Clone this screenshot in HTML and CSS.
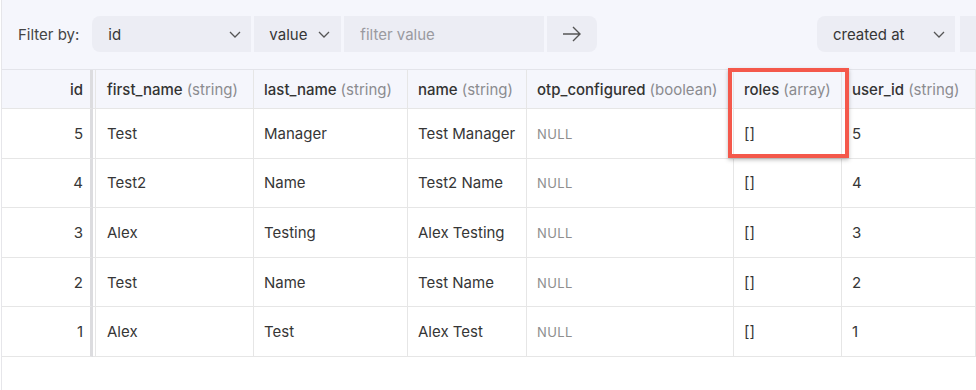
FILE: index.html
```html
<!DOCTYPE html>
<html lang="en">
<head>
    <meta charset="UTF-8">
    <meta name="viewport" content="width=device-width, initial-scale=1.0">
    <title>users</title>
    <link rel="stylesheet" href="styles.css">
</head>
<body>

    <div class="page">
        <div class="filter-bar">
            <span class="filter-label">Filter by:</span>
            <div class="select select-field">
                <span>id</span>
                <svg class="chevron" width="12" height="7" viewBox="0 0 12 7"><path d="M1 1l5 5 5-5" fill="none" stroke="#555" stroke-width="1.3"/></svg>
            </div>
            <div class="select select-op">
                <span>value</span>
                <svg class="chevron" width="12" height="7" viewBox="0 0 12 7"><path d="M1 1l5 5 5-5" fill="none" stroke="#555" stroke-width="1.3"/></svg>
            </div>
            <input class="filter-input" type="text" placeholder="filter value">
            <button class="go">
                <svg width="20" height="16" viewBox="0 0 20 16"><path d="M1 8h17M11 1l7 7-7 7" fill="none" stroke="#555" stroke-width="1.4"/></svg>
            </button>
            <div class="spacer"></div>
            <div class="select select-sort">
                <span>created at</span>
                <svg class="chevron" width="12" height="7" viewBox="0 0 12 7"><path d="M1 1l5 5 5-5" fill="none" stroke="#555" stroke-width="1.3"/></svg>
            </div>
            <div class="select select-dir"></div>
        </div>

        <table class="grid">
            <thead>
                <tr>
                    <th class="c-id num">id</th>
                    <th class="c-first first">first_name <span class="type">(string)</span></th>
                    <th class="c-last">last_name <span class="type">(string)</span></th>
                    <th class="c-name">name <span class="type">(string)</span></th>
                    <th class="c-otp">otp_configured <span class="type">(boolean)</span></th>
                    <th class="c-roles">roles <span class="type">(array)</span></th>
                    <th class="c-user">user_id <span class="type">(string)</span></th>
                    <th class="c-more"></th>
                </tr>
            </thead>
            <tbody>
                <tr>
                    <td class="num">5</td><td class="first">Test</td><td>Manager</td><td>Test Manager</td>
                    <td><span class="null">NULL</span></td><td>[]</td><td>5</td><td></td>
                </tr>
                <tr>
                    <td class="num">4</td><td class="first">Test2</td><td>Name</td><td>Test2 Name</td>
                    <td><span class="null">NULL</span></td><td>[]</td><td>4</td><td></td>
                </tr>
                <tr>
                    <td class="num">3</td><td class="first">Alex</td><td>Testing</td><td>Alex Testing</td>
                    <td><span class="null">NULL</span></td><td>[]</td><td>3</td><td></td>
                </tr>
                <tr>
                    <td class="num">2</td><td class="first">Test</td><td>Name</td><td>Test Name</td>
                    <td><span class="null">NULL</span></td><td>[]</td><td>2</td><td></td>
                </tr>
                <tr>
                    <td class="num">1</td><td class="first">Alex</td><td>Test</td><td>Alex Test</td>
                    <td><span class="null">NULL</span></td><td>[]</td><td>1</td><td></td>
                </tr>
            </tbody>
        </table>

        <!-- annotation around the roles column -->
        <div class="highlight"></div>
    </div>

</body>
</html>
```

FILE: styles.css
```css
* {
    margin: 0;
    padding: 0;
    box-sizing: border-box;
}

body {
    font-family: 'Inter', 'Noto Sans', sans-serif;
    font-size: 15px;
    color: #363636;
    background-color: #fff;
    overflow: hidden;
}

.page {
    position: relative;
    margin-left: 1px;
    height: 390px;
    border-left: 1px solid #e6e6ea;
    overflow: hidden;
}

/* filter bar */
.filter-bar {
    display: flex;
    align-items: center;
    gap: 3px;
    height: 70px;
    padding: 16px 0 17px 16px;
    background-color: #f5f6fc;
    border-bottom: 1px solid #e3e4ea;
}

.filter-label {
    color: #444;
    margin-right: 10px;
}

.select,
.filter-input,
.go {
    height: 36px;
    background-color: #ecedf4;
    border: none;
    font-family: inherit;
    font-size: 15px;
    color: #363636;
}

.select {
    display: flex;
    align-items: center;
    justify-content: space-between;
}

.select-field {
    width: 159px;
    padding: 0 10px 0 16px;
    border-radius: 8px 0 0 8px;
}

.select-op {
    width: 87px;
    padding: 0 11px 0 15px;
}

.filter-input {
    width: 200px;
    padding: 0 16px;
    outline: none;
}

.filter-input::placeholder {
    color: #9a9aa0;
}

.go {
    width: 50px;
    border-radius: 0 8px 8px 0;
    display: flex;
    align-items: center;
    justify-content: center;
}

.spacer {
    flex: 1;
}

.select-sort {
    width: 138px;
    padding: 0 10px 0 16px;
    border-radius: 8px 0 0 8px;
}

.select-dir {
    width: 40px;
    margin-left: 2px;
    margin-right: -24px;
}

/* table */
.grid {
    table-layout: fixed;
    width: 1122px;
    border-collapse: separate;
    border-spacing: 0;
}

.grid th,
.grid td {
    text-align: left;
    padding: 0 10px;
    border-right: 1px solid #e6e6e6;
    border-bottom: 1px solid #e6e6e6;
    white-space: nowrap;
    overflow: hidden;
}

.grid th {
    height: 39px;
    font-weight: 500;
    color: #333;
    background-color: #f5f6fc;
}

.grid td {
    height: 49.6px;
}

.type {
    font-weight: 400;
    color: #8b8b8f;
}

.grid .num {
    text-align: right;
    padding-right: 7px;
    border-right: 3px solid #dcdcdf;
}

.grid .first {
    padding-left: 14px;
    box-shadow: inset 2px 0 0 #fff, inset 3px 0 0 #e6e6e6;
}

.grid th.first {
    box-shadow: inset 2px 0 0 #f5f6fc, inset 3px 0 0 #e6e6e6;
}

.c-id { width: 91px; }
.c-first { width: 161px; }
.c-last { width: 154px; }
.c-name { width: 119px; }
.c-otp { width: 207px; }
.c-roles { width: 108px; }
.c-user { width: 134px; }
.c-more { width: 148px; }

.null {
    font-size: 13px;
    color: #8e8e8e;
    letter-spacing: 0.4px;
}

.highlight {
    position: absolute;
    left: 726px;
    top: 68px;
    width: 121px;
    height: 90px;
    border: 4px solid #f4584b;
    box-shadow: 0 2px 4px rgba(0, 0, 0, 0.25);
    pointer-events: none;
}
```
